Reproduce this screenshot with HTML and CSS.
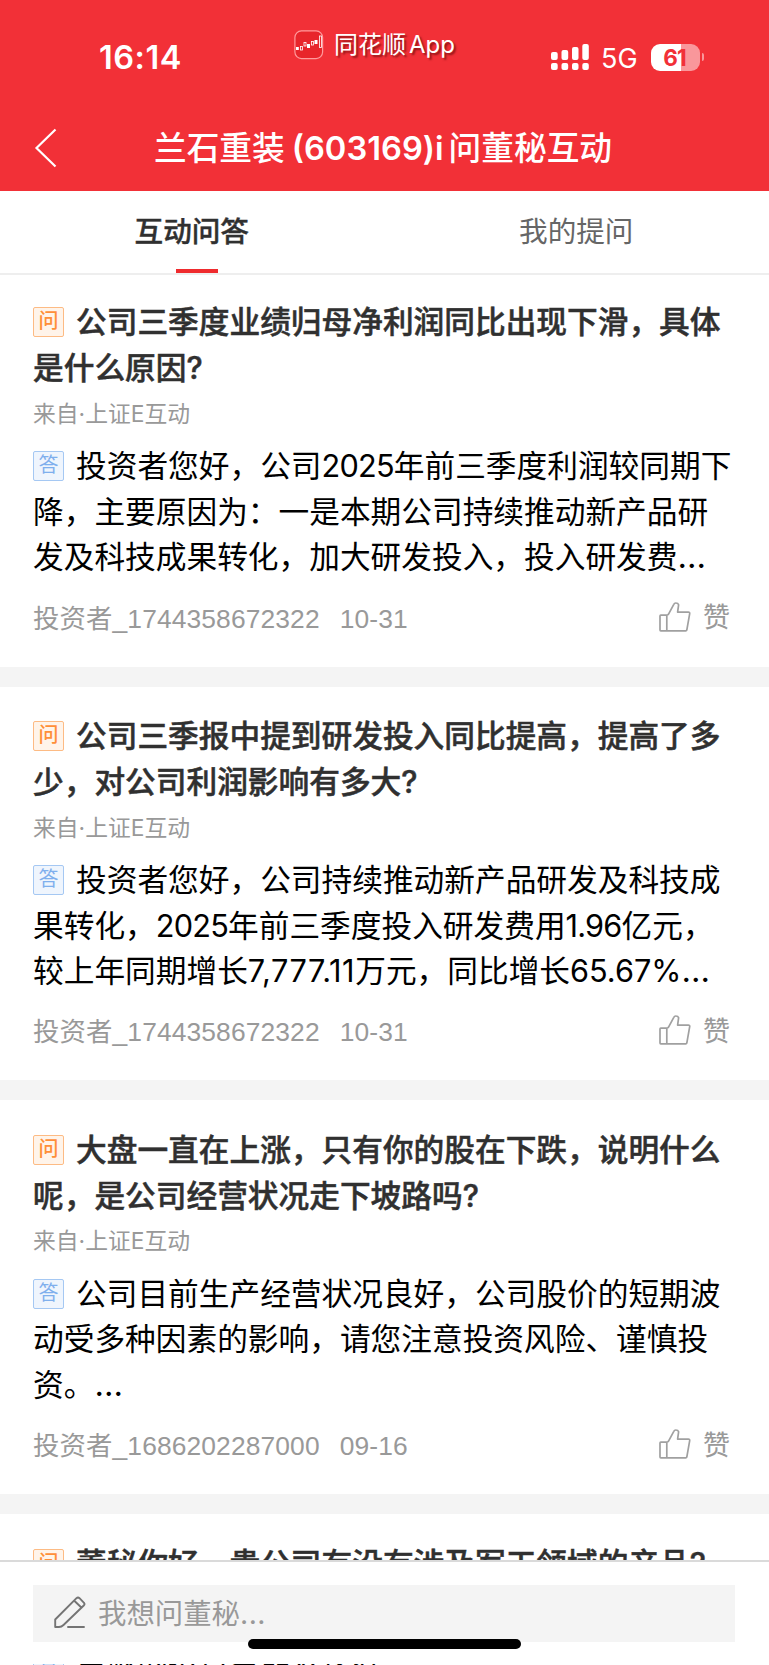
FILE: index.html
```html
<!DOCTYPE html>
<html lang="zh-CN">
<head>
<meta charset="utf-8">
<title>i问董秘互动</title>
<link rel="stylesheet" href="styles.css">
</head>
<body>
<svg class="defs" width="0" height="0">
  <symbol id="thumb" viewBox="0 0 32 30">
    <path d="M1.8 13.200Q1 13.200 1 14v14q0 .8.8.8h25q.8 0 1-.7l2.900-16.500q.2-1.500-1.300-1.500H18.600l1-7.300Q19.100 1 16.700 1q-1.300 0-1.900 1.300L9.400 12.300q-.7.9-1.800.9zM7.800 13.200v15.500" fill="none" stroke="#a0a0a0" stroke-width="1.700" stroke-linejoin="round"/>
  </symbol>
</svg>
<div class="phone">
  <header class="header">
    <div class="status">
      <span class="time">16:14</span>
      <span class="brand">
        <svg width="30" height="30" viewBox="0 0 30 30">
          <rect x=".9" y=".9" width="27.700" height="27.700" rx="6.500" fill="#e8252b" stroke="#ff9a9c" stroke-width="1.200"/>
          <g fill="#fff"><rect x="2" y="17" width="2.800" height="3"/><rect x="13" y="14" width="3" height="4"/><rect x="20.500" y="10" width="3" height="4"/></g>
          <g fill="none" stroke="#fff" stroke-width=".8"><rect x="6.400" y="16.500" width="2" height="3.500"/><rect x="10" y="12.500" width="2" height="3.500"/><rect x="17.500" y="11.500" width="2" height="3.500"/><rect x="25.400" y="6" width="2" height="11.500"/></g>
        </svg>
        <span>同花顺<b>App</b></span>
      </span>
      <span class="net">
        <svg width="39" height="28" viewBox="0 0 39 28" fill="#fff">
          <rect x="0" y="9" width="6.700" height="8" rx="2"/><rect x="10.500" y="7" width="6.700" height="10" rx="2"/><rect x="21" y="4" width="6.500" height="13" rx="2"/><rect x="31.300" y="1" width="6.500" height="16" rx="2"/>
          <rect x="0" y="20" width="6.700" height="7" rx="2"/><rect x="10.500" y="20" width="6.700" height="7" rx="2"/><rect x="21" y="20" width="6.500" height="7" rx="2"/><rect x="31.300" y="20" width="6.500" height="7" rx="2"/>
        </svg>
        <span class="g5">5G</span>
        <span class="battery">61</span><i class="nub"></i>
      </span>
    </div>
    <div class="nav">
      <svg class="back" width="24" height="42" viewBox="0 0 24 42"><path d="M21.500 2.500 2.500 21 21.500 39.500" fill="none" stroke="#fff" stroke-width="2.200"/></svg>
      <h1><span>兰石重装</span><span class="code">(603169)i</span><span>问董秘互动</span></h1>
    </div>
  </header>
  <nav class="tabs"><a class="tab active">互动问答</a><a class="tab">我的提问</a></nav>

  <main class="list">
    <article class="card">
      <h2><i class="tag ask">问</i>公司三季度业绩归母净利润同比出现下滑，具体<br>是什么原因?</h2>
      <p class="from">来自·上证E互动</p>
      <p class="answer"><i class="tag reply">答</i>投资者您好，公司<span class="n">2025</span>年前三季度利润较同期下<br>降，主要原因为：一是本期公司持续推动新产品研<br>发及科技成果转化，加大研发投入，投入研发费<span class="dots">…</span></p>
      <footer class="meta"><span class="user">投资者_1744358672322</span><time>10-31</time><span class="like"><svg width="32" height="30"><use href="#thumb"/></svg><span>赞</span></span></footer>
    </article>
    <article class="card">
      <h2><i class="tag ask">问</i>公司三季报中提到研发投入同比提高，提高了多<br>少，对公司利润影响有多大?</h2>
      <p class="from">来自·上证E互动</p>
      <p class="answer"><i class="tag reply">答</i>投资者您好，公司持续推动新产品研发及科技成<br>果转化，<span class="n">2025</span>年前三季度投入研发费用<span class="n">1.96</span>亿元，<br>较上年同期增长<span class="wide">7,777.11</span>万元，同比增长65.67%<span class="dots">…</span></p>
      <footer class="meta"><span class="user">投资者_1744358672322</span><time>10-31</time><span class="like"><svg width="32" height="30"><use href="#thumb"/></svg><span>赞</span></span></footer>
    </article>
    <article class="card">
      <h2><i class="tag ask">问</i>大盘一直在上涨，只有你的股在下跌，说明什么<br>呢，是公司经营状况走下坡路吗?</h2>
      <p class="from">来自·上证E互动</p>
      <p class="answer"><i class="tag reply">答</i>公司目前生产经营状况良好，公司股价的短期波<br>动受多种因素的影响，请您注意投资风险、谨慎投<br>资。<span class="dots">…</span></p>
      <footer class="meta"><span class="user">投资者_1686202287000</span><time>09-16</time><span class="like"><svg width="32" height="30"><use href="#thumb"/></svg><span>赞</span></span></footer>
    </article>
    <article class="card">
      <h2><i class="tag ask">问</i>董秘你好，贵公司有没有涉及军工领域的产品?</h2>
      <p class="from">来自·上证E互动</p>
      <p class="answer"><i class="tag reply">答</i>尊敬的投资者朋友您好</p>
    </article>
  </main>

  <div class="composer">
    <div class="field">
      <svg width="32" height="33" viewBox="0 0 32 33" fill="none" stroke="#747474" stroke-width="1.900" stroke-linejoin="round" stroke-linecap="round"><path d="M1.200 31V23.500L22.500 2.200Q24 .8 25.500 2.200L30 6.800Q31 8 30 9.200L9.500 29Q7.500 31 5 31ZM20.300 4.700 27.600 11.800M14 31H30"/></svg>
      <span>我想问董秘<span class="ell">...</span></span>
    </div>
  </div>
  <div class="home"></div>
</div>
</body>
</html>
```
FILE: styles.css
```css
* { box-sizing: border-box; }
body { margin: 0; background: #fff; font-family: Inter, "Noto Sans CJK SC", sans-serif; }
h1, h2, p { margin: 0; font-weight: 400; }
i { font-style: normal; }
.defs { position: absolute; }
.phone { position: relative; width: 769px; height: 1665px; overflow: hidden; display: flex; flex-direction: column; white-space: nowrap; }

.header { flex: none; height: 191px; background: #f23037; color: #fff; }
.status { height: 104px; display: flex; align-items: flex-start; }
.time { width: 196px; padding-left: 99px; margin-top: 36px; font-size: 32.5px; line-height: 43px; font-weight: 600; letter-spacing: .5px; }
.brand { margin-left: 98px; margin-top: 29px; height: 31px; display: flex; align-items: center; gap: 10px; font-size: 24px; line-height: 31px; text-shadow: 2px 2px 2px rgba(80, 0, 0, .6); width: 257px; }
.brand b { font-weight: 400; margin-left: 3px; }
.net { display: flex; align-items: center; height: 28px; margin-top: 43px; }
.g5 { margin-left: 11px; width: 50px; padding-top: 2px; font-size: 27px; }
.battery { width: 49px; height: 27px; border-radius: 9px; background: linear-gradient(90deg, #fff 30px, #f9979b 30px); color: #f23037; font-size: 22.5px; font-weight: 700; line-height: 28px; text-align: center; letter-spacing: -1px; padding-right: 2px; }
.nub { width: 2px; height: 8px; margin-left: 2px; border-radius: 0 3px 3px 0; background: #f9979b; }
.nav { height: 87px; display: flex; align-items: center; }
.back { margin-left: 34px; }
.nav h1 { display: flex; margin-left: 96px; padding-top: 1px; font-size: 32.7px; line-height: 46px; font-weight: 500; }
.code { margin: 0 5px 0 7px; font-weight: 600; }

.tabs { flex: none; height: 84px; border-bottom: 2px solid #eee; display: flex; }
.tab { flex: 1; text-align: center; font-size: 28.6px; line-height: 81px; padding-right: 1px; color: #666; position: relative; }
.tab.active { color: #303030; font-weight: 500; -webkit-text-stroke: .4px; }
.tab.active::after { content: ""; position: absolute; left: 176px; top: 77.5px; width: 42px; height: 4.500px; background: #ef2b2e; }

.list { flex: 1; min-height: 0; margin-top: -2.3px; }
.card { height: 413.8px; padding: 26.600px 38px 0 33px; border-bottom: 20.700px solid #f4f4f4; }
.card:first-child { border-top: 2px solid #eee; padding-top: 24.600px; }
.card h2, .answer { font-size: 30.700px; }
.card h2 { line-height: 45.700px; font-weight: 500; color: #303030; -webkit-text-stroke: .5px; }
.from { height: 52.600px; line-height: 46px; font-size: 22.8px; color: #999; }
.answer { line-height: 45.600px; color: #000; }
.n { letter-spacing: -.8px; }
.wide { letter-spacing: .6px; }
.dots { letter-spacing: 2px; font-size: 33px; line-height: 0; }
.tag { display: inline-block; vertical-align: 5px; width: 31px; height: 30px; margin-right: 12px; border: 1px solid; border-radius: 2px; font-size: 20px; line-height: 27px; text-align: center; -webkit-text-stroke: 0; }
.ask { color: #ff8f38; background: #fff4ea; border-color: #fdbb84; font-weight: 500; }
.reply { color: #7fafed; background: #eff5fd; border-color: #a5c8f3; }
.meta { display: flex; align-items: baseline; height: 50px; margin-top: 13.500px; font: 26.400px/50px "Liberation Sans", "Noto Sans CJK SC", sans-serif; color: #999; }
.meta .user { letter-spacing: .12px; }
.meta time { margin-left: 20px; letter-spacing: .1px; }
.like { margin: 0 1px 0 auto; height: 46px; align-self: flex-start; display: flex; align-items: center; gap: 12px; font-size: 27px; }
.like span { padding-top: 3px; }

.composer { position: absolute; left: 0; right: 0; top: 1560px; height: 104px; padding: 23px 34px 0 33px; background: #fff; border-top: 2px solid #dadada; }
.field { height: 57px; padding: 0 0 5px 21px; display: flex; align-items: center; gap: 12px; background: #f4f4f4; color: #999; font-size: 28.4px; }
.field svg { margin-top: 3px; }
.ell { letter-spacing: .5px; }
.home { position: absolute; left: 248px; top: 1639px; width: 273px; height: 10px; border-radius: 5px; background: #000; }
```
